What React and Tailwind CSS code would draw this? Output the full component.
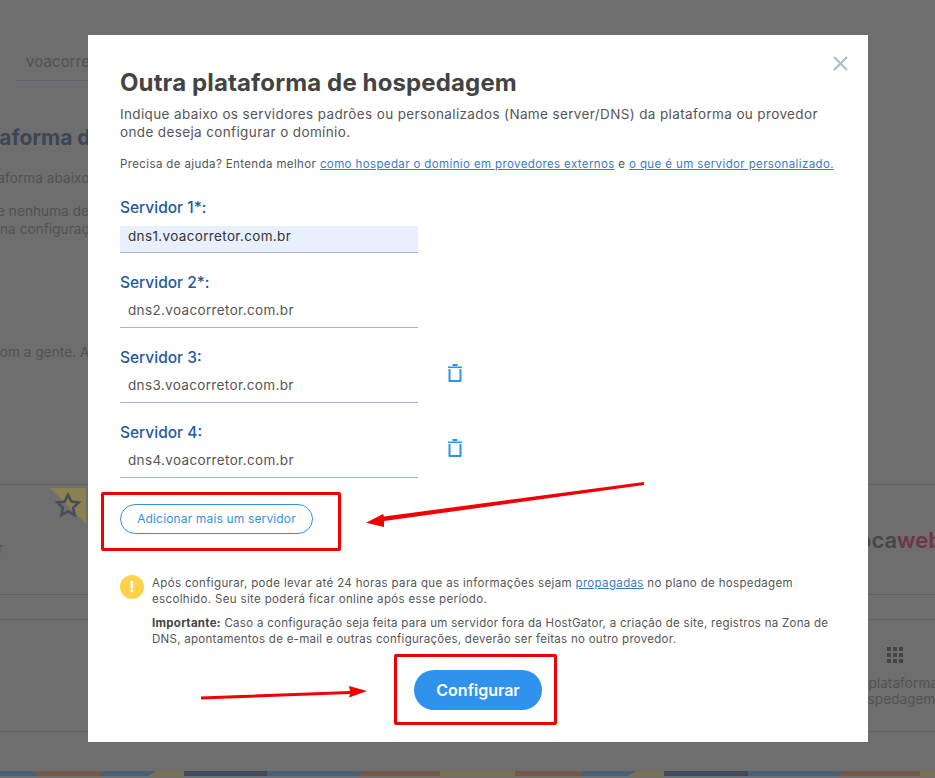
import React from "react";
import { X } from "lucide-react";

const font = "font-['Inter','Noto_Sans',sans-serif]";

function TrashIcon() {
  return (
    <svg width="14" height="18" viewBox="0 0 14 18" fill="none" className="text-[#2f93ee] block">
      <path d="M4.5 1h5" stroke="currentColor" strokeWidth="2" />
      <path d="M0 3.25h14" stroke="currentColor" strokeWidth="1.5" />
      <path d="M1.5 5v12h11V5" stroke="currentColor" strokeWidth="2" strokeLinejoin="round" />
    </svg>
  );
}

function ServerField({ label, value, filled, removable }) {
  return (
    <div className="flex items-start gap-[30px] h-[75px]">
      <div className="w-[298px]">
        <label className="block pt-px text-[15.5px] leading-5 font-medium text-[#1f5a9a] mb-[8px]">{label}</label>
        <input
          readOnly
          value={value}
          className={
            filled
              ? "block w-full h-[27px] pb-[7px] px-2 bg-[#e8f0fe] border-b border-[#a3b4d0] text-[13.5px] tracking-[0.35px] text-[#333] outline-none"
              : "block w-full h-[36px] -mt-[9px] px-2 border-b border-[#a3b4d0] text-[13.5px] tracking-[0.35px] text-[#555] outline-none"
          }
        />
      </div>
      {removable && (
        <button className="mt-[17px]">
          <TrashIcon />
        </button>
      )}
    </div>
  );
}

function Background() {
  return (
    <div className="w-full h-full flex flex-col text-[#525252] text-[13.5px] tracking-[0.1px] overflow-hidden">
      <div className="h-[81px] w-[200px] pt-[52px] pl-4 shrink-0">
        <div className="border-b border-[#5d6470] pl-[10px] h-[29px] text-[15px] leading-5 whitespace-nowrap">voacorretor.com.br</div>
      </div>
      <div className="h-[403px] shrink-0 overflow-hidden">
        <p className="mt-[41px] -ml-[40px] text-[21px] leading-8 font-bold tracking-normal text-[#3c4656] whitespace-nowrap">Plataforma de hospedagem</p>
        <p className="mt-[14px] -ml-[27px] leading-5 whitespace-nowrap">Plataforma abaixo</p>
        <p className="mt-[14px] -ml-[3px] leading-[18px] whitespace-nowrap">e nenhuma de</p>
        <p className="leading-[18px] whitespace-nowrap">na configuração</p>
        <p className="mt-[104px] -ml-[8px] leading-5 whitespace-nowrap">com a gente. A</p>
      </div>
      <div className="h-[110px] shrink-0 border-t border-[#626262] flex justify-between">
        <div className="w-[86px] flex flex-col">
          <div className="relative ml-[50px] mt-[3px] w-9 h-9">
            <div className="absolute inset-0 bg-[#8a8150] [clip-path:polygon(0_0,100%_0,100%_100%)]" />
            <svg width="26" height="26" viewBox="0 0 24 24" fill="none" stroke="#474c5c" strokeWidth="2.4" className="absolute left-[5px] top-[4px]">
              <path d="M12 2.5l3 6.3 6.8.9-5 4.7 1.3 6.8-6.1-3.3-6.1 3.3 1.3-6.8-5-4.7 6.8-.9z" />
            </svg>
          </div>
          <span className="mt-[14px] -ml-[2px] leading-5">r</span>
        </div>
        <div className="pt-[41px] text-[22px] leading-7 font-semibold tracking-normal whitespace-nowrap w-[77px] overflow-hidden">
          <span className="text-[#474747]">oca</span><span className="text-[#6d3549]">web</span>
        </div>
      </div>
      <div className="h-[25px] shrink-0 border-t border-[#626262]" />
      <div className="h-[113px] shrink-0 border-t border-b border-[#626262] flex justify-end">
        <div className="w-[80px] flex flex-col items-center pt-[27px] leading-4 whitespace-nowrap">
          <svg width="16" height="16" viewBox="0 0 16 16" fill="#444">
            <rect x="0" y="0" width="4" height="4" /><rect x="6" y="0" width="4" height="4" /><rect x="12" y="0" width="4" height="4" />
            <rect x="0" y="6" width="4" height="4" /><rect x="6" y="6" width="4" height="4" /><rect x="12" y="6" width="4" height="4" />
            <rect x="0" y="12" width="4" height="4" /><rect x="6" y="12" width="4" height="4" /><rect x="12" y="12" width="4" height="4" />
          </svg>
          <div className="mt-[12px] self-end -mr-[3px] flex flex-col items-center shrink-0">
            <span>Outra plataforma</span>
            <span>de hospedagem</span>
          </div>
        </div>
      </div>
      <div className="mt-[39px] h-[5px] shrink-0 flex">
        <div className="w-[35px] bg-[#4a6078]" />
        <div className="w-[66px] bg-[#755849]" />
        <div className="w-[47px] bg-[#4a6078]" />
        <div className="w-[36px] bg-[#4a6078]">
          <div className="h-full bg-[#7a7350] [clip-path:polygon(9px_0,100%_0,100%_100%,0_100%)]" />
        </div>
        <div className="w-[83px] bg-[#404a5a]" />
        <div className="w-[88px] bg-[#4a6078]" />
        <div className="w-[85px] bg-[#4a6078]">
          <div className="h-full bg-[#755849] [clip-path:polygon(10px_0,100%_0,100%_100%,0_100%)]" />
        </div>
        <div className="w-[75px] bg-[#7a7350]" />
        <div className="w-[67px] bg-[#755849]" />
        <div className="w-[45px] bg-[#4a6078]" />
        <div className="w-[37px] bg-[#4a6078]">
          <div className="h-full bg-[#7a7350] [clip-path:polygon(10px_0,100%_0,100%_100%,0_100%)]" />
        </div>
        <div className="w-[84px] bg-[#404a5a]" />
        <div className="w-[87px] bg-[#4a6078]" />
        <div className="w-[85px] bg-[#4a6078]">
          <div className="h-full bg-[#755849] [clip-path:polygon(10px_0,100%_0,100%_100%,0_100%)]" />
        </div>
        <div className="flex-1 bg-[#7a7350]" />
      </div>
    </div>
  );
}

export default function App() {
  return (
    <div className={`relative w-[935px] h-[778px] overflow-hidden bg-[#6e6e6e] ${font}`}>
      <Background />

      {/* modal */}
      <div className="absolute left-[88px] top-[35px] w-[780px] h-[707px] bg-white pl-8 pr-8 pt-[33px]">
        <button className="absolute right-[19px] top-[20px] text-[#a9b8cf]">
          <X size={16} strokeWidth={2} className="w-[17px] h-[17px] scale-[1.4]" />
        </button>
        <h2 className="text-[24px] leading-[30px] font-bold tracking-[0.13px] text-[#434343]">Outra plataforma de hospedagem</h2>
        <p className="mt-[7px] text-[13.5px] leading-[18px] tracking-[0.37px] text-[#555]">
          Indique abaixo os servidores padrões ou personalizados (Name server/DNS) da plataforma ou provedor onde deseja configurar o domínio.
        </p>
        <p className="mt-[15px] text-[11.5px] leading-4 tracking-[0.38px] text-[#555] whitespace-nowrap">
          Precisa de ajuda? Entenda melhor <a className="text-[#3a7bc8] underline">como hospedar o domínio em provedores externos</a> e <a className="text-[#3a7bc8] underline">o que é um servidor personalizado.</a>
        </p>

        <div className="mt-[25px]">
          <ServerField label="Servidor 1*:" value="dns1.voacorretor.com.br" filled />
          <ServerField label="Servidor 2*:" value="dns2.voacorretor.com.br" />
          <ServerField label="Servidor 3:" value="dns3.voacorretor.com.br" removable />
          <ServerField label="Servidor 4:" value="dns4.voacorretor.com.br" removable />
        </div>

        <button className="block mt-[7px] w-[193px] h-[30px] rounded-full border border-[#2f93ee] text-[12px] tracking-[0.15px] text-[#2f93ee]">
          Adicionar mais um servidor
        </button>

        <div className="mt-[41px] flex gap-2">
          <div className="w-6 h-6 shrink-0 rounded-full bg-[#ffd24d] text-white text-[15px] leading-6 font-bold text-center">!</div>
          <div className="text-[11.5px] leading-4 tracking-[0.35px] text-[#555]">
            <p>Após configurar, pode levar até 24 horas para que as informações sejam <a className="text-[#3a7bc8] underline">propagadas</a> no plano de hospedagem escolhido. Seu site poderá ficar online após esse período.</p>
            <p className="mt-[8px] tracking-[0.28px]"><strong className="text-[#434343]">Importante:</strong> Caso a configuração seja feita para um servidor fora da HostGator, a criação de site, registros na Zona de DNS, apontamentos de e-mail e outras configurações, deverão ser feitas no outro provedor.</p>
          </div>
        </div>

        <div className="mt-[23px] flex justify-center">
          <button className="w-[128px] h-10 rounded-full bg-[#2f93ee] text-white text-[16px] font-semibold">Configurar</button>
        </div>
      </div>

      {/* red annotations */}
      <div className="absolute left-[101px] top-[492px] w-[240px] h-[59px] border-[3px] rounded-[2px] border-[#f00000]" />
      <div className="absolute left-[394px] top-[654px] w-[163px] h-[71px] border-[3px] rounded-[2px] border-[#f00000]" />
      <svg className="absolute left-0 top-0 pointer-events-none" width="935" height="778" viewBox="0 0 935 778">
        <path d="M644 482L384 516.5L383 514L366 522.7L384 527L384 521L644 485Z" fill="#f00000" />
        <path d="M201 696.5L350 691L349 686L367 691L349 697.5L350 694L201 699.5Z" fill="#f00000" />
      </svg>
    </div>
  );
}
